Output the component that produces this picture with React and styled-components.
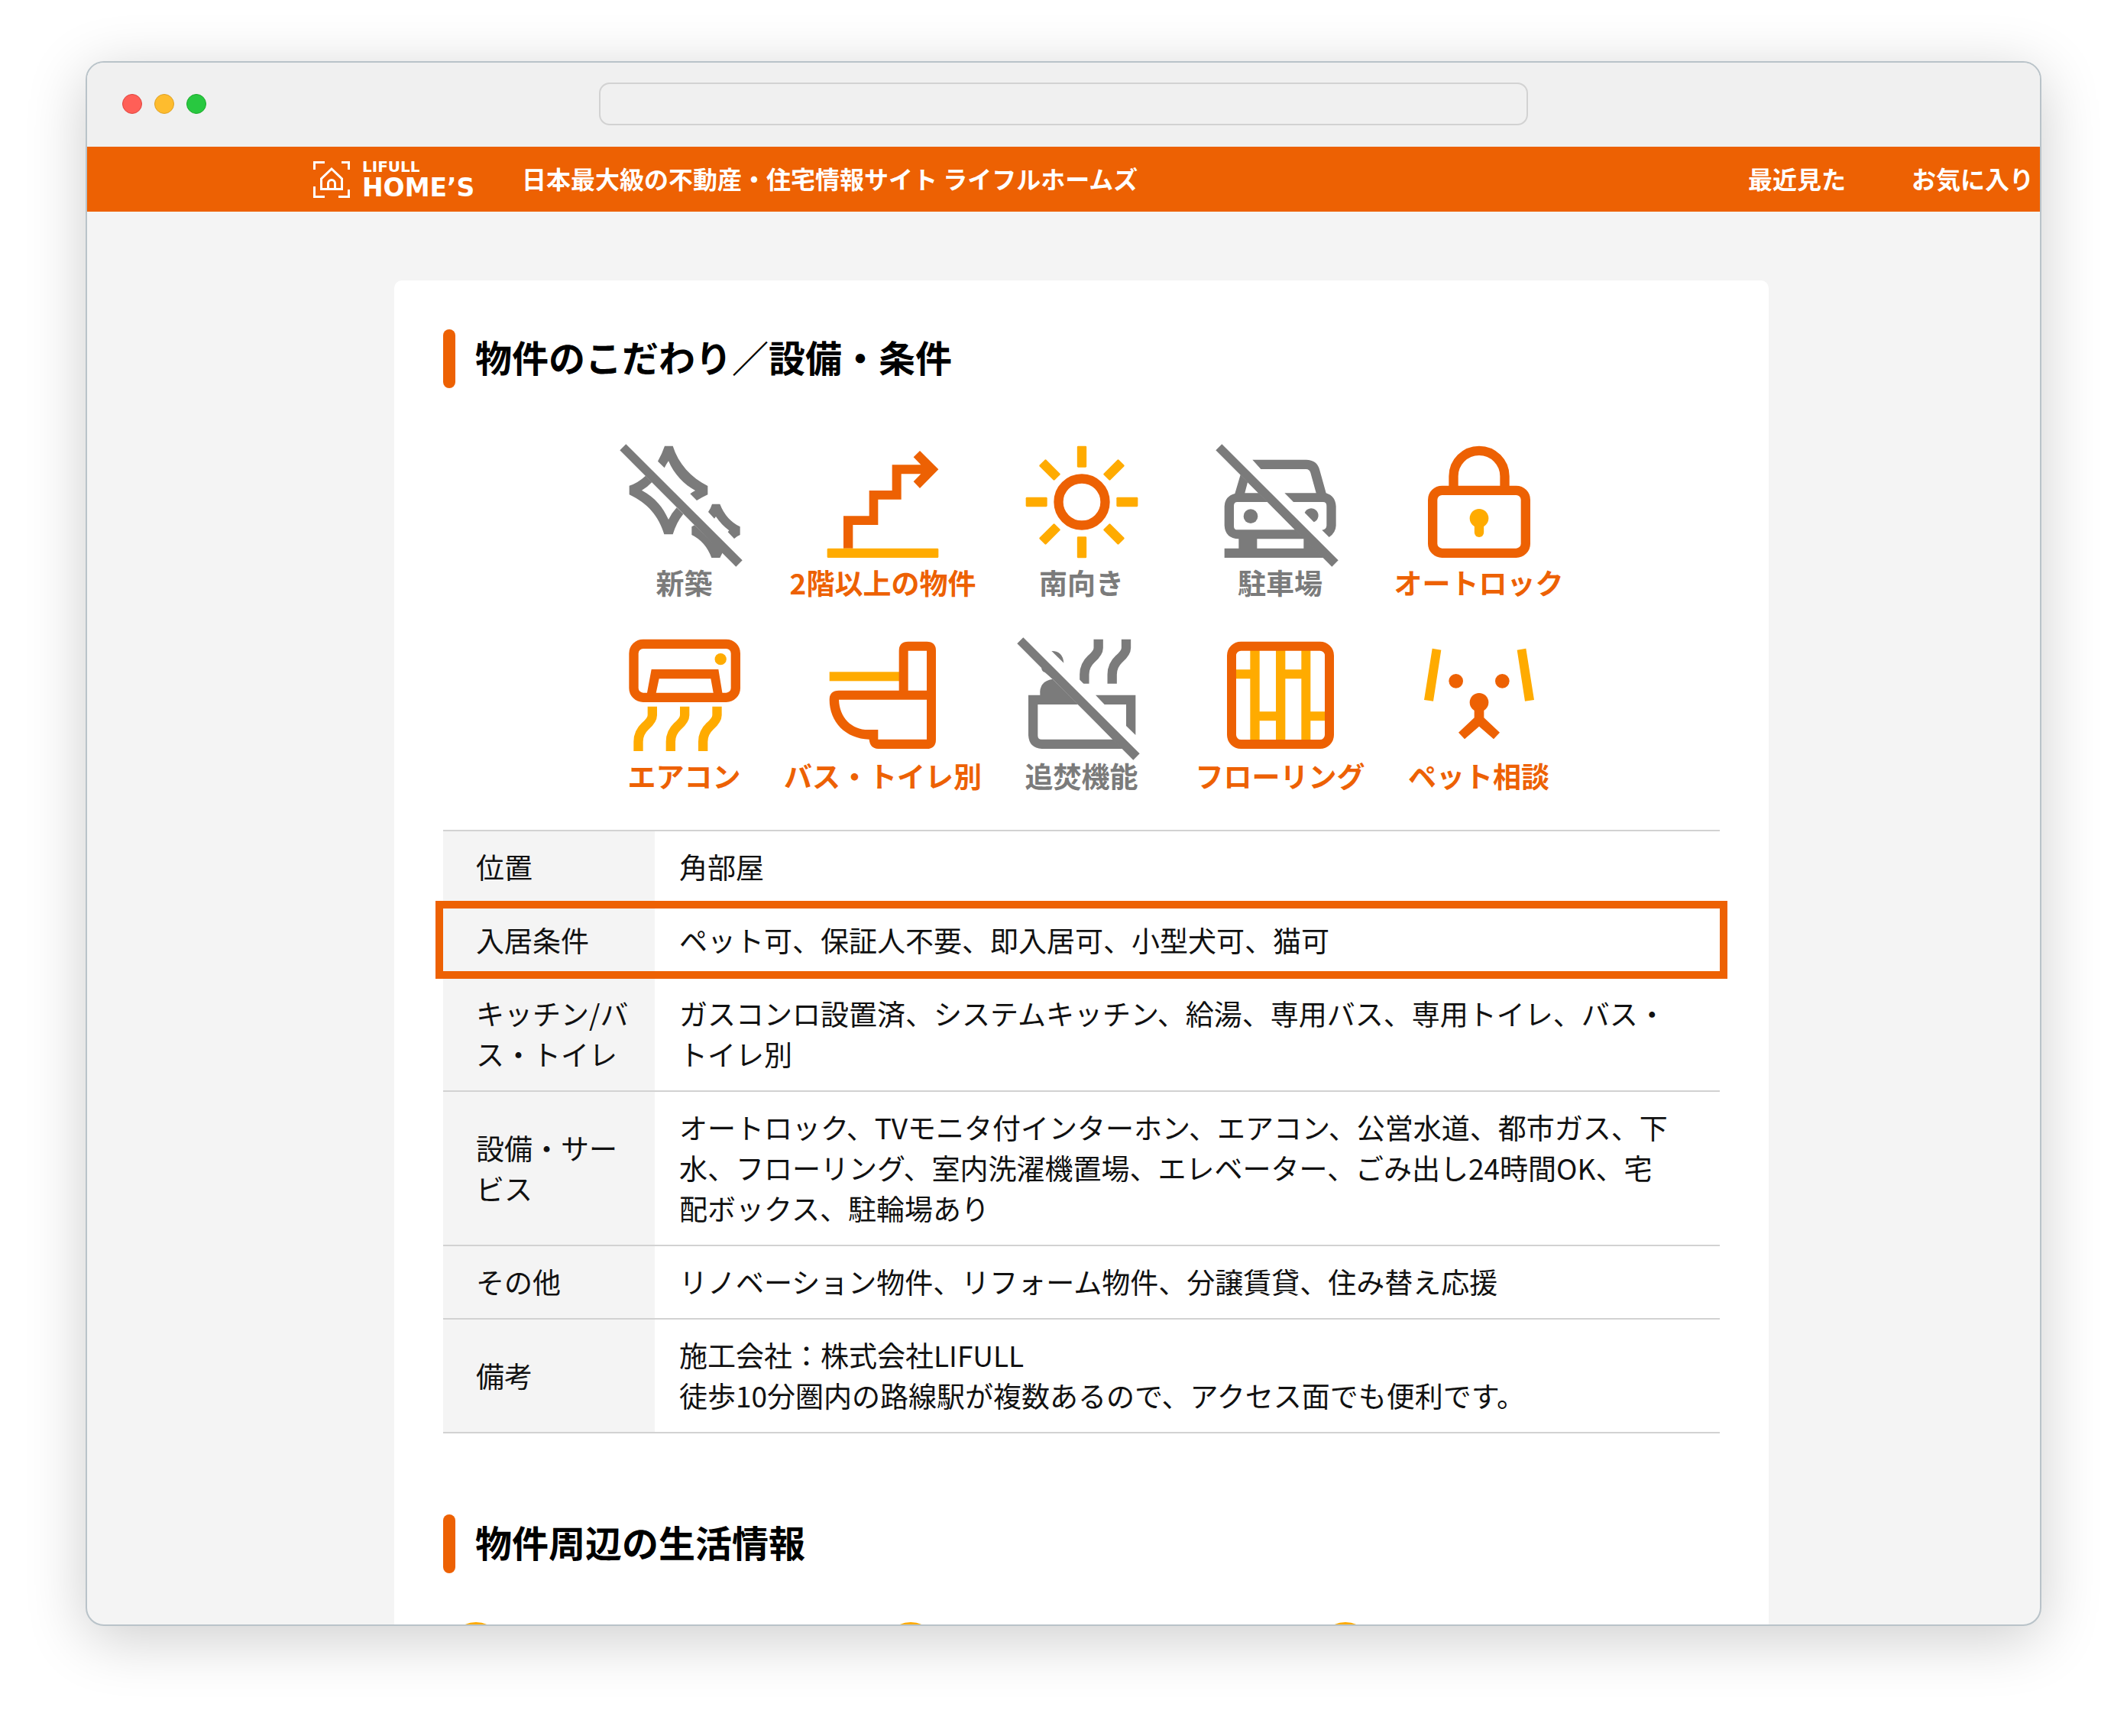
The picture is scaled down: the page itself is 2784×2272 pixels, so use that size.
import React from 'react';
import styled, { createGlobalStyle, css } from 'styled-components';

const colors = {
   orange: '#ed6103',
   yellow: '#ffab00',
   grey: '#7b7b7b',
   page: '#f4f4f4',
   line: '#d2d2d2',
};

const GlobalStyle = createGlobalStyle`
   * {
      box-sizing: border-box;
   }

   body {
      margin: 0;
      background: #fff;
      color: #111;
      font-family: "Noto Sans CJK JP", sans-serif;
   }
`;

const Desktop = styled.div`
   display: flex;
   height: 100vh;
   padding: 80px 112px 144px;
`;

const Window = styled.div`
   display: flex;
   flex-direction: column;
   flex: 1;
   min-width: 0;
   overflow: hidden;
   border: 2px solid #b9c3c9;
   border-radius: 24px;
   background: ${colors.page};
   box-shadow: 0 16px 80px rgba(0, 0, 0, 0.2);
`;

const TitleBar = styled.div`
   display: grid;
   grid-template-columns: 1fr 1216px 1fr;
   align-items: center;
   flex-shrink: 0;
   height: 110px;
   padding: 0 46px 2px;
   background: #f0f0f0;
`;

const Lights = styled.div`
   display: flex;
   gap: 16px;
`;

const Light = styled.button`
   width: 26px;
   height: 26px;
   padding: 0;
   border: 1px solid ${(props) => props.$edge};
   border-radius: 50%;
   background: ${(props) => props.$fill};
`;

const AddressBar = styled.input`
   width: 100%;
   height: 56px;
   padding: 0 20px;
   border: 2px solid #d2d2d2;
   border-radius: 14px;
   background: transparent;
   font-size: 26px;
`;

const SiteHeader = styled.header`
   display: flex;
   align-items: center;
   flex-shrink: 0;
   height: 85px;
   padding: 0 8px 0 296px;
   background: ${colors.orange};
   color: #fff;
   font-size: 32px;
   font-weight: 700;
   line-height: 40px;
   white-space: nowrap;
`;

const Logo = styled.a`
   display: flex;
   align-items: center;
   gap: 16px;
   width: 211px;
   color: inherit;
   text-decoration: none;
`;

const LogoMark = styled.svg`
   flex-shrink: 0;
   width: 48px;
   height: 48px;
`;

const LogoText = styled.span`
   display: flex;
   flex-direction: column;
   font-family: "DejaVu Sans", sans-serif;
   font-size: 33px;
   line-height: 34px;
`;

const LogoSmall = styled.span`
   font-size: 20px;
   line-height: 22px;
`;

const Tagline = styled.p`
   margin: 0;
   padding: 0 0 4px 62px;
`;

const HeaderNav = styled.nav`
   display: flex;
   gap: 86px;
   margin-left: auto;
   padding-bottom: 3px;
`;

const HeaderLink = styled.a`
   color: inherit;
   text-decoration: none;
`;

const Page = styled.main`
   display: flex;
   flex-direction: column;
   flex: 1;
   min-height: 0;
   padding: 90px 355px 0 402px;
`;

const Card = styled.div`
   flex-shrink: 0;
   padding: 64px;
   border-radius: 10px;
   background: #fff;
`;

const Heading = styled.h2`
   display: flex;
   gap: 26px;
   min-height: 77px;
   margin: 0 0 64px;
   color: #000;
   font-size: 48px;
   font-weight: 700;
   line-height: 71px;

   &::before {
      content: '';
      width: 16px;
      border-radius: 8px;
      background: ${colors.orange};
   }
`;

const FeatureGrid = styled.ul`
   display: grid;
   grid-template-columns: repeat(5, 260px);
   row-gap: 43px;
   justify-content: center;
   margin: 0 0 51px;
   padding: 0;
   list-style: none;
`;

const Feature = styled.li`
   display: flex;
   flex-direction: column;
   align-items: center;
   color: ${(props) => (props.$off ? colors.grey : colors.orange)};
   font-size: 37px;
   font-weight: 700;
   line-height: 40px;
   white-space: nowrap;
`;

const FeatureIcon = styled.svg`
   width: 170px;
   height: 170px;
`;

const SpecTable = styled.table`
   width: 100%;
   margin-bottom: 106px;
   border-collapse: collapse;
   border-bottom: 2px solid ${colors.line};
   font-size: 37px;
   line-height: 53px;
`;

const cellCss = css`
   padding-top: 20px;
   padding-bottom: 21px;
   text-align: left;
   vertical-align: middle;
`;

const markedCss = css`
   position: relative;

   &::after {
      content: '';
      position: absolute;
      inset: -6px -10px -2px;
      border: 10px solid ${colors.orange};
   }
`;

const SpecRow = styled.tr`
   border-top: 2px solid ${colors.line};
   ${(props) => props.$marked && markedCss}
`;

const SpecName = styled.th`
   ${cellCss}
   width: 277px;
   padding-left: 43px;
   padding-right: 24px;
   background: ${colors.page};
   font-weight: 400;
`;

const SpecValue = styled.td`
   ${cellCss}
   padding-left: 32px;
   padding-right: 56px;
   white-space: pre-line;
`;

const AreaGrid = styled.div`
   display: grid;
   grid-template-columns: repeat(3, 1fr);
   column-gap: 36px;
`;

const AreaPin = styled.svg`
   width: 84px;
   height: 84px;
`;

const Slash = () => <path fill={colors.grey} d="M1 52L25 28L482 484L457 509Z" />;

const NewIcon = () => (
   <g fill={colors.grey}>
      <path d="M177 35H209C231 105 280 158 346 192V226Q325 236 303 249L277 223Q286 215 297 210C255 188 213 145 192 94Q184 105 176 121L150 95Q166 67 177 35Z" />
      <path d="M38 191Q72 180 102 152L127 177Q108 198 87 209C140 238 170 275 192 324Q203 300 224 277L250 302Q223 335 209 382H175C153 310 110 260 38 226Z" />
      <path d="M363 263H394Q418 325 473 352V384Q461 389 450 399L425 373L430 367Q400 345 378 312L372 320L348 294Q358 280 363 263Z" />
      <path d="M294 346L283 352V384Q337 410 361 474H394L405 452Z" />
      <Slash />
   </g>
);

const StairsIcon = () => (
   <>
      <path fill={colors.orange} d="M99 437V310H200V210H290V109H403L374 79L399 54L472 127L399 201L374 175L403 145H326V245H235V345H136V437Z" />
      <rect fill={colors.yellow} x="35" y="437" width="437" height="37" rx="4" />
   </>
);

const SunIcon = () => (
   <>
      <circle cx="255" cy="255" r="91.5" fill="none" stroke={colors.orange} strokeWidth="37" />
      {[0, 45, 90, 135, 180, 225, 270, 315].map((angle) => (
         <rect
            key={angle}
            fill={colors.yellow}
            x="236.5"
            y="35"
            width="37"
            height="84"
            rx="4"
            transform={`rotate(${angle} 255 255)`}
         />
      ))}
   </>
);

const CarIcon = () => (
   <g fill={colors.grey}>
      <path d="M145 89H356Q398 90 408 127L434 220Q471 232 473 272V347Q472 375 446 393L418 365Q436 362 436 347V270Q436 255 422 255H306L271 220H395L373 140Q368 126 356 126H178Z" />
      <path
         fillRule="evenodd"
         d="M98 148L76 222Q37 232 35 272V347Q38 398 91 400V437H35V474H425Z
            M126 178L168 220H115Z
            M86 255H204L311 364H86Q72 364 72 350V270Q72 255 86 255Z
            M163 400H346V437H163Z"
      />
      <circle cx="138" cy="311" r="28" />
      <path d="M350 297A28 28 0 1 1 386 334Z" />
      <Slash />
   </g>
);

const LockIcon = () => (
   <>
      <g fill="none" stroke={colors.orange} strokeWidth="37">
         <rect x="72.5" y="209.5" width="365" height="246" rx="37" />
         <path d="M154.5 200V154A100.5 100.5 0 0 1 355.5 154V200" />
      </g>
      <g fill={colors.yellow}>
         <circle cx="255" cy="319" r="37" />
         <rect x="236.5" y="330" width="37" height="63" rx="18.5" />
      </g>
   </>
);

const AirconIcon = () => (
   <>
      <rect x="55.5" y="53.5" width="400" height="210" rx="37" fill="none" stroke={colors.orange} strokeWidth="37" />
      <path fill={colors.orange} d="M125 153H388L405 256H370L358 190H155L141 256H106Z" />
      <circle cx="396.5" cy="113" r="23" fill={colors.yellow} />
      {[0, 127, 254].map((x) => (
         <path
            key={x}
            fill="none"
            stroke={colors.yellow}
            strokeWidth="37"
            d="M128.5 299V333Q128.5 352 101 376Q73.5 402 73.5 437V474"
            transform={`translate(${x} 0)`}
         />
      ))}
   </>
);

const ToiletIcon = () => (
   <>
      <rect x="44" y="163" width="280" height="36" fill={colors.yellow} />
      <path
         fill={colors.orange}
         fillRule="evenodd"
         d="M317 236V80Q317 44 353 44H426Q462 44 462 80V428Q462 465 426 465H235Q203 463 200 428C108 425 44 360 44 272Q44 236 81 236Z
            M353 80H426V236H353Z
            M81 272H426V428H235V390H200C133 392 83 344 81 272Z"
      />
   </>
);

const BathIcon = () => (
   <g fill={colors.grey}>
      <g fill="none" stroke={colors.grey} strokeWidth="37">
         <path d="M320 35V69Q320 88 292.5 112Q265 138 265 173V209" />
         <path d="M429 35V69Q429 88 401.5 112Q374 138 374 173V209" />
      </g>
      <path fill="#fff" d="M244 191L263 211H244Z" />
      <path d="M136 81Q180 80 184 128Z" />
      <path d="M96 147Q98 162 110 165L140 191V170Z" />
      <path d="M309 254H466V411L429 375V291H344Z" />
      <path
         fillRule="evenodd"
         d="M45 254H91Q86 200 140 191L416 465H98Q48 463 45 412Z
            M82 291H242L376 428H97Q82 428 82 413Z"
      />
      <Slash />
   </g>
);

const FlooringIcon = () => (
   <>
      <path
         fill={colors.yellow}
         d="M136 70H173V440H136ZM237 70H274V440H237ZM337 70H373V440H337Z
            M70 154H140V190H70ZM270 154H340V190H270ZM170 319H240V355H170ZM370 319H440V355H370Z"
      />
      <rect x="63" y="62" width="384" height="385" rx="37" fill="none" stroke={colors.orange} strokeWidth="36" />
   </>
);

const DogIcon = () => (
   <>
      <path fill={colors.yellow} d="M71 71L106 77L75 278L39 273ZM439 71L404 77L435 278L471 273Z" />
      <g fill={colors.orange}>
         <circle cx="164" cy="199" r="28" />
         <circle cx="346" cy="199" r="28" />
         <circle cx="255" cy="283" r="37" />
         <path d="M236 308V343L174 401L198 427L255 377L312 427L336 401L274 343V308Z" />
      </g>
   </>
);

const features = [
   { label: '新築', icon: NewIcon, off: true },
   { label: '2階以上の物件', icon: StairsIcon },
   { label: '南向き', icon: SunIcon, off: true },
   { label: '駐車場', icon: CarIcon, off: true },
   { label: 'オートロック', icon: LockIcon },
   { label: 'エアコン', icon: AirconIcon },
   { label: 'バス・トイレ別', icon: ToiletIcon },
   { label: '追焚機能', icon: BathIcon, off: true },
   { label: 'フローリング', icon: FlooringIcon },
   { label: 'ペット相談', icon: DogIcon },
];

const specs = [
   { name: '位置', value: '角部屋' },
   { name: '入居条件', value: 'ペット可、保証人不要、即入居可、小型犬可、猫可', marked: true },
   {
      name: 'キッチン/バス・トイレ',
      value: 'ガスコンロ設置済、システムキッチン、給湯、専用バス、専用トイレ、バス・トイレ別',
   },
   {
      name: '設備・サービス',
      value: 'オートロック、TVモニタ付インターホン、エアコン、公営水道、都市ガス、下水、フローリング、室内洗濯機置場、エレベーター、ごみ出し24時間OK、宅配ボックス、駐輪場あり',
   },
   { name: 'その他', value: 'リノベーション物件、リフォーム物件、分譲賃貸、住み替え応援' },
   {
      name: '備考',
      value: '施工会社：株式会社LIFULL\n徒歩10分圏内の路線駅が複数あるので、アクセス面でも便利です。',
   },
];

const Header = () => (
   <SiteHeader>
      <Logo href="#">
         <LogoMark viewBox="0 0 48 48" fill="none" stroke="#fff" strokeWidth="3">
            <path d="M1.5 11V1.5H15M37 1.5H46.5V11M46.5 37V46.5H33M15 46.5H1.5V33" />
            <path d="M10.5 36.5V23L24 10L37.5 23V36.5Z" />
            <path d="M19.5 36V29A4.5 4.5 0 0 1 28.5 29V36" />
         </LogoMark>
         <LogoText>
            <LogoSmall>LIFULL</LogoSmall>
            HOME’S
         </LogoText>
      </Logo>
      <Tagline>日本最大級の不動産・住宅情報サイト ライフルホームズ</Tagline>
      <HeaderNav>
         <HeaderLink href="#">最近見た</HeaderLink>
         <HeaderLink href="#">お気に入り</HeaderLink>
      </HeaderNav>
   </SiteHeader>
);

const App = () => (
   <Desktop>
      <GlobalStyle />
      <Window>
         <TitleBar>
            <Lights>
               <Light $fill="#ff5f57" $edge="#e0443e" aria-label="Close" />
               <Light $fill="#febc2e" $edge="#dea123" aria-label="Minimize" />
               <Light $fill="#28c840" $edge="#1aab29" aria-label="Zoom" />
            </Lights>
            <AddressBar type="text" aria-label="Address" />
         </TitleBar>
         <Header />
         <Page>
            <Card>
               <Heading>物件のこだわり／設備・条件</Heading>
               <FeatureGrid>
                  {features.map(({ label, icon: Icon, off }) => (
                     <Feature key={label} $off={off}>
                        <FeatureIcon viewBox="0 0 510 510" aria-hidden="true">
                           <Icon />
                        </FeatureIcon>
                        {label}
                     </Feature>
                  ))}
               </FeatureGrid>
               <SpecTable>
                  <tbody>
                     {specs.map(({ name, value, marked }) => (
                        <SpecRow key={name} $marked={marked}>
                           <SpecName scope="row">{name}</SpecName>
                           <SpecValue>{value}</SpecValue>
                        </SpecRow>
                     ))}
                  </tbody>
               </SpecTable>
               <Heading>物件周辺の生活情報</Heading>
               <AreaGrid>
                  {[1, 2, 3].map((pin) => (
                     <AreaPin key={pin} viewBox="0 0 84 84" aria-hidden="true">
                        <circle cx="43" cy="34" r="30" fill="none" stroke={colors.yellow} strokeWidth="8" />
                     </AreaPin>
                  ))}
               </AreaGrid>
            </Card>
         </Page>
      </Window>
   </Desktop>
);

export default App;
